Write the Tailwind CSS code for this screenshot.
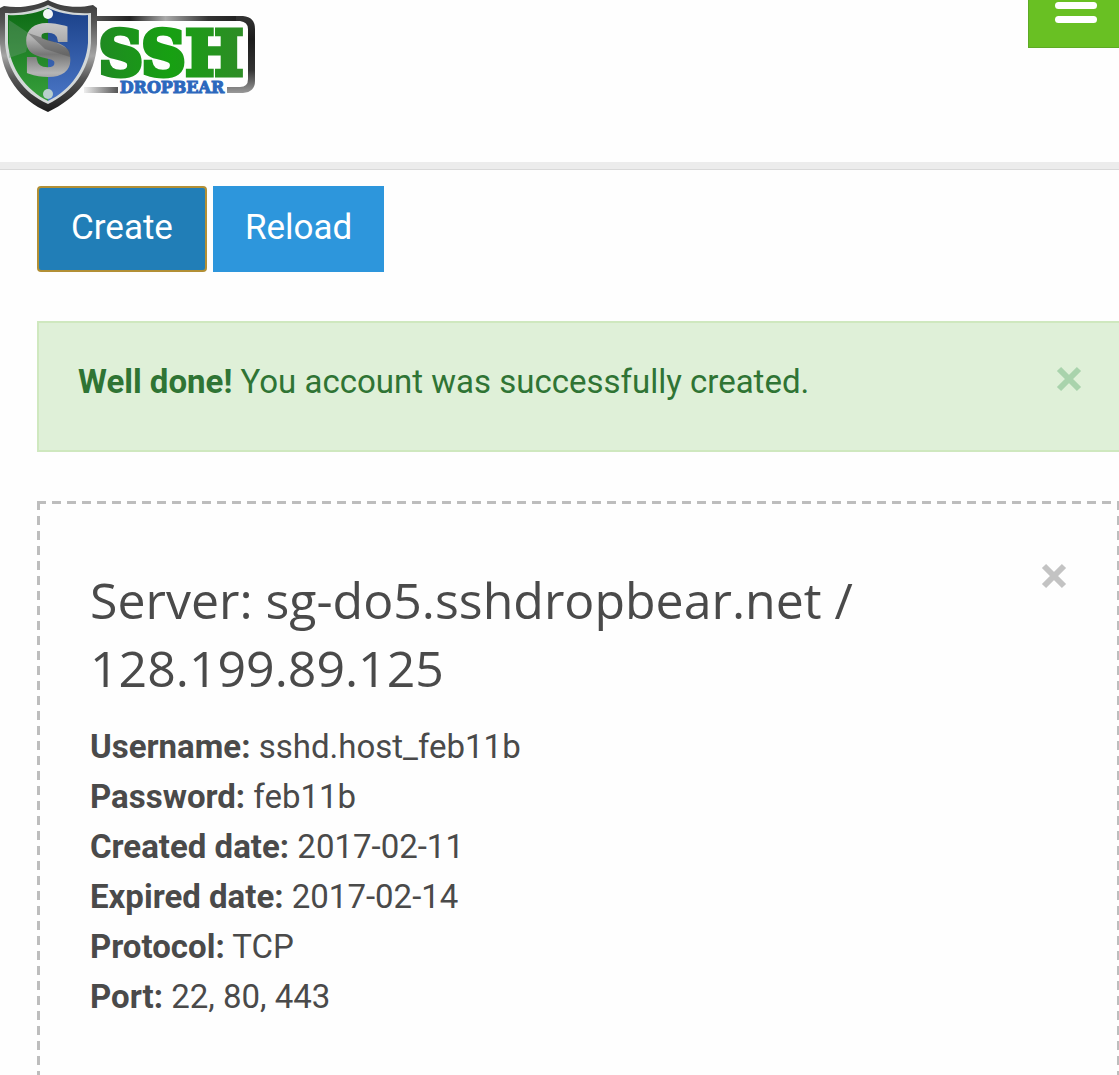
<!DOCTYPE html>
<html lang="en">
<head>
    <meta charset="UTF-8">
    <meta name="viewport" content="width=device-width, initial-scale=1.0">
    <title>SSH Dropbear</title>
    <script src="https://cdn.jsdelivr.net/npm/@tailwindcss/browser@4"></script>
</head>
<body class="bg-[#fefefe] font-['Roboto',sans-serif] text-[33px] leading-[50px] text-[#4a4a4a] overflow-x-hidden">
    <header class="flex items-start justify-between pb-[46px]">
        <a href="#" aria-label="SSH Dropbear">
            <svg class="block" width="260" height="116" viewBox="0 0 260 116">
                <defs>
                    <linearGradient id="frame" x1="0" y1="0" x2="1" y2="0">
                        <stop offset="0" stop-color="#555"/>
                        <stop offset=".25" stop-color="#222"/>
                        <stop offset=".5" stop-color="#aaa"/>
                        <stop offset=".8" stop-color="#333"/>
                        <stop offset="1" stop-color="#222"/>
                    </linearGradient>
                    <linearGradient id="frameLow" x1="0" y1="0" x2="1" y2="0">
                        <stop offset="0" stop-color="#eee"/>
                        <stop offset="1" stop-color="#555"/>
                    </linearGradient>
                    <linearGradient id="side" x1="0" y1="0" x2="0" y2="1">
                        <stop offset="0" stop-color="#333"/>
                        <stop offset=".3" stop-color="#1c1c1c"/>
                        <stop offset=".7" stop-color="#333"/>
                        <stop offset="1" stop-color="#999"/>
                    </linearGradient>
                    <linearGradient id="rim" x1="0" y1="0" x2="0" y2="1">
                        <stop offset="0" stop-color="#3a3a3a"/>
                        <stop offset=".2" stop-color="#555"/>
                        <stop offset=".5" stop-color="#a5a5a5"/>
                        <stop offset=".7" stop-color="#555"/>
                        <stop offset="1" stop-color="#1c1c1c"/>
                    </linearGradient>
                    <linearGradient id="steel" x1="0" y1="0" x2="0" y2="1">
                        <stop offset="0" stop-color="#d5d5d5"/>
                        <stop offset=".35" stop-color="#b0b0b0"/>
                        <stop offset=".55" stop-color="#777"/>
                        <stop offset=".8" stop-color="#b5b5b5"/>
                        <stop offset="1" stop-color="#808080"/>
                    </linearGradient>
                    <linearGradient id="green" x1="0" y1="0" x2="0" y2="1">
                        <stop offset="0" stop-color="#0d6a14"/>
                        <stop offset="1" stop-color="#37a03c"/>
                    </linearGradient>
                    <linearGradient id="blue" x1="0" y1="0" x2="0" y2="1">
                        <stop offset="0" stop-color="#1a4088"/>
                        <stop offset="1" stop-color="#4a76c6"/>
                    </linearGradient>
                    <linearGradient id="leaf" x1="0" y1="0" x2="1" y2="0">
                        <stop offset="0" stop-color="#1f8a22"/>
                        <stop offset=".5" stop-color="#17a012"/>
                        <stop offset="1" stop-color="#2e8c26"/>
                    </linearGradient>
                </defs>
                <!-- plate outline -->
                <rect x="94" y="16" width="143" height="5" fill="url(#frame)"/>
                <rect x="84" y="87" width="34" height="6" fill="url(#frameLow)"/>
                <path d="M236 16H243Q255 17 255 29V81Q255 92 243 93H227V87H240Q248 87 248 79V29Q248 22 240 21H236Z" fill="url(#side)"/>
                <!-- shield -->
                <path d="M48 0C38 5 21 9 4 6L0 8V44C2 76 20 100 48 112C77 98 95 77 97 44V8L93 5C75 9 59 6 48 0Z" fill="url(#rim)"/>
                <path d="M48 5C37 10 22 14 5 13V43C7 70 23 93 48 104C73 92 89 70 91 43V13C74 14 59 11 48 5Z" fill="#d3d8d8"/>
                <path d="M48 8C37 13 23 16 8 15V43C10 68 26 90 48 101Z" fill="url(#green)"/>
                <path d="M48 8C59 13 73 16 88 15V43C86 68 71 90 48 101Z" fill="url(#blue)"/>
                <path d="M9 20L30 34L26 52L9 58Z" fill="#6f9c78" fill-opacity=".4"/>
                <text x="48" y="73" text-anchor="middle" font-family="DejaVu Serif" font-weight="700" font-size="64" fill="url(#steel)" stroke="url(#steel)" stroke-width="6">S</text>
                <path d="M28 33L55 42L70 50V57L45 49Z" fill="#555" fill-opacity=".5"/>
                <circle cx="48" cy="14" r="5" fill="#f2f5f5"/>
                <circle cx="48" cy="94" r="5" fill="#b9cfcd"/>
                <text x="171" y="75" text-anchor="middle" font-family="DejaVu Serif" font-weight="700" font-size="61" fill="url(#leaf)" stroke="url(#leaf)" stroke-width="5">SSH</text>
                <text x="172" y="93" text-anchor="middle" font-family="DejaVu Serif" font-weight="700" font-size="16" fill="#2c68bd" stroke="#2c68bd" stroke-width="1">DROPBEAR</text>
            </svg>
        </a>
        <button type="button" aria-label="Menu" class="flex flex-col items-center justify-end gap-[7px] w-[91px] h-12 pl-1 pb-6 bg-[#69c023] border-l border-b border-[#5eaa25]">
            <span class="w-[42px] h-[7px] rounded-sm bg-white"></span>
            <span class="w-[42px] h-[7px] rounded-sm bg-white"></span>
        </button>
    </header>
    <div class="h-2 bg-[#ececec] border-b border-[#d9d9d9]"></div>

    <main class="pl-[37px] pt-4">
        <div class="flex gap-[6px]">
            <button type="button" class="h-[86px] px-8 pb-0.5 rounded-sm bg-[#217eb7] border-2 border-[#b28f35] text-[35px] text-white">Create</button>
            <button type="button" class="h-[86px] px-8 pb-0.5 bg-[#2d96dc] text-[35px] text-white">Reload</button>
        </div>

        <div role="alert" class="flex items-start justify-between mt-[49px] h-[131px] pt-[34px] pl-[39px] pr-9 bg-[#dff0d8] border-2 border-r-0 border-[#cfe8bf] text-[#2f7434]">
            <p><strong>Well done!</strong> You account was successfully created.</p>
            <button type="button" aria-label="Close" class="mt-2 text-[#a9d3ac]">
                <svg width="28" height="28" viewBox="0 0 28 28" stroke="currentColor" stroke-width="6"><path d="M4 4L24 24M24 4L4 24"/></svg>
            </button>
        </div>

        <!-- dashed frame: 9px dashes, 6px gaps -->
        <section class="mt-[49px] pt-[65px] pl-[53px] pr-[51px] pb-24 bg-[image:repeating-linear-gradient(90deg,#bdbdbd_0_9px,transparent_9px_15px),repeating-linear-gradient(180deg,#bdbdbd_0_9px,transparent_9px_15px),repeating-linear-gradient(180deg,#bdbdbd_0_9px,transparent_9px_15px)] bg-[length:100%_3px,3px_100%,2px_100%] bg-[position:0_0,0_0,100%_0] bg-no-repeat">
            <div class="flex items-start justify-between">
                <h2 class="max-w-[800px] font-['Open_Sans',sans-serif] text-[50px] leading-[68px]">Server: sg-do5.sshdropbear.net / 128.199.89.125</h2>
                <button type="button" aria-label="Close" class="-mt-1 text-[#c3c3c3]">
                    <svg width="28" height="28" viewBox="0 0 28 28" stroke="currentColor" stroke-width="6"><path d="M4 4L24 24M24 4L4 24"/></svg>
                </button>
            </div>
            <div class="mt-5">
                <p><strong>Username:</strong> sshd.host_feb11b</p>
                <p><strong>Password:</strong> feb11b</p>
                <p><strong>Created date:</strong> 2017-02-11</p>
                <p><strong>Expired date:</strong> 2017-02-14</p>
                <p><strong>Protocol:</strong> TCP</p>
                <p><strong>Port:</strong> 22, 80, 443</p>
            </div>
        </section>
    </main>
</body>
</html>
